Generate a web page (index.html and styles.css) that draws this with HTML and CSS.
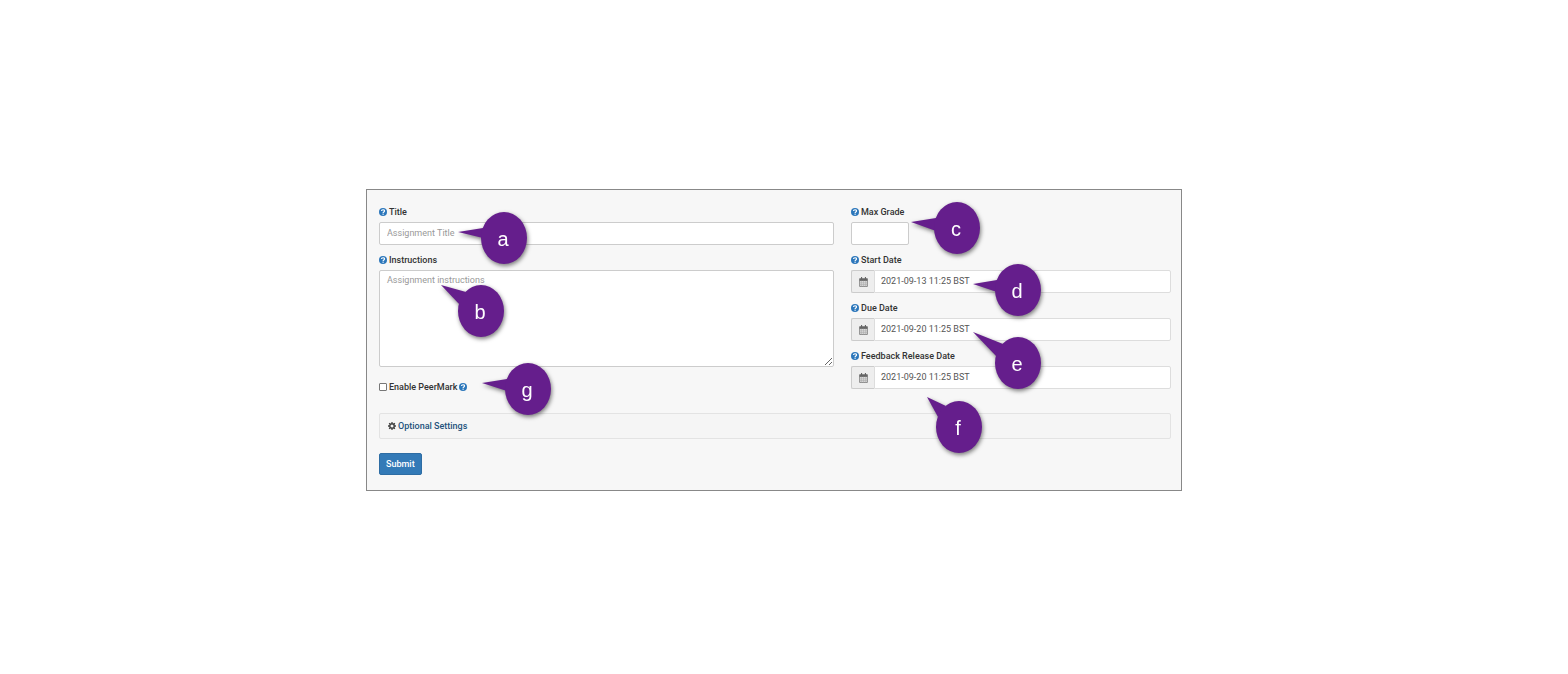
FILE: index.html
```
<!DOCTYPE html>
<html lang="en">
<head>
  <meta charset="UTF-8">
  <meta name="viewport" content="width=device-width, initial-scale=1.0">
  <title>Assignment Settings</title>
  <link rel="stylesheet" href="styles.css">
</head>
<body>
  <!-- Shared icons -->
  <svg class="sprite" aria-hidden="true">
    <symbol id="help" viewBox="0 0 16 16">
      <circle cx="8" cy="8" r="8" fill="#2c77bb"/>
      <path d="M5 6.2C5 2.7 11 2.7 11 6c0 2-2.800 2-2.800 4" fill="none" stroke="#fff" stroke-width="2.400"/>
      <rect x="7" y="11.200" width="2.400" height="2.400" fill="#fff"/>
    </symbol>
    <symbol id="calendar" viewBox="0 0 16 18">
      <path d="M1 3h14v14H1z" fill="#ddd" stroke="#777" stroke-width="1.500"/>
      <path d="M1 3h14v4H1z" fill="#666"/>
      <path d="M4.500 0v5M11.500 0v5" stroke="#666" stroke-width="2"/>
      <path d="M1 10.500h14M1 13.500h14M4.500 7v10M8 7v10M11.500 7v10" stroke="#aaa" stroke-width="1"/>
    </symbol>
    <symbol id="gear" viewBox="0 0 16 16">
      <circle cx="8" cy="8" r="4.500" fill="none" stroke="#444" stroke-width="3"/>
      <path d="M8 0v3M8 13v3M0 8h3M13 8h3M2.300 2.300l2.200 2.200M11.500 11.500l2.200 2.200M13.700 2.300l-2.200 2.200M4.500 11.500l-2.200 2.200" stroke="#444" stroke-width="2.600"/>
    </symbol>
  </svg>

  <form class="panel">
    <div class="columns">
      <div class="column">
        <div class="field">
          <label for="title"><svg class="icon"><use href="#help"/></svg>Title</label>
          <input type="text" id="title" placeholder="Assignment Title">
        </div>
        <div class="field">
          <label for="instructions"><svg class="icon"><use href="#help"/></svg>Instructions</label>
          <textarea id="instructions" placeholder="Assignment instructions"></textarea>
        </div>
        <div class="check">
          <input type="checkbox" id="peermark">
          <label for="peermark">Enable PeerMark<svg class="icon"><use href="#help"/></svg></label>
        </div>
      </div>

      <div class="column">
        <div class="field">
          <label for="grade"><svg class="icon"><use href="#help"/></svg>Max Grade</label>
          <input type="text" id="grade" class="short">
        </div>
        <div class="field">
          <label for="start"><svg class="icon"><use href="#help"/></svg>Start Date</label>
          <div class="date">
            <span class="addon"><svg><use href="#calendar"/></svg></span>
            <input type="text" id="start" value="2021-09-13 11:25 BST">
          </div>
        </div>
        <div class="field">
          <label for="due"><svg class="icon"><use href="#help"/></svg>Due Date</label>
          <div class="date">
            <span class="addon"><svg><use href="#calendar"/></svg></span>
            <input type="text" id="due" value="2021-09-20 11:25 BST">
          </div>
        </div>
        <div class="field">
          <label for="feedback"><svg class="icon"><use href="#help"/></svg>Feedback Release Date</label>
          <div class="date">
            <span class="addon"><svg><use href="#calendar"/></svg></span>
            <input type="text" id="feedback" value="2021-09-20 11:25 BST">
          </div>
        </div>
      </div>
    </div>

    <div class="optional">
      <a href="#optional"><svg class="icon"><use href="#gear"/></svg>Optional Settings</a>
    </div>
    <button type="submit" class="submit">Submit</button>

    <!-- Lettered callouts over the form -->
    <div class="callout a"><svg><path d="M16 16L-9 20L16 26z"/><ellipse cx="37" cy="26" rx="23" ry="26"/></svg><span>a</span></div>
    <div class="callout b"><svg><path d="M22 7L-3 0L16 20z"/><ellipse cx="37" cy="26" rx="23" ry="26"/></svg><span>b</span></div>
    <div class="callout c"><svg><path d="M16 16L-9 20L16 29z"/><ellipse cx="37" cy="26" rx="23" ry="26"/></svg><span>c</span></div>
    <div class="callout d"><svg><path d="M16 16L-8 20L16 28z"/><ellipse cx="37" cy="26" rx="23" ry="26"/></svg><span>d</span></div>
    <div class="callout e"><svg><path d="M22 7L-8 -5L16 20z"/><ellipse cx="37" cy="26" rx="23" ry="26"/></svg><span>e</span></div>
    <div class="callout f"><svg><path d="M24 5L5 -4L16 16z"/><ellipse cx="37" cy="26" rx="23" ry="26"/></svg><span>f</span></div>
    <div class="callout g"><svg><path d="M16 16L-9 20L16 28z"/><ellipse cx="37" cy="26" rx="23" ry="26"/></svg><span>g</span></div>
  </form>
</body>
</html>
```
FILE: styles.css
```
* {
  box-sizing: border-box;
}

body {
  margin: 0;
  padding: 189px 20px 40px 0;
  background: #fff;
  color: #333;
  font-family: Roboto, "Liberation Sans", Arial, sans-serif;
  font-size: 9px;
}

.sprite {
  position: absolute;
  width: 0;
  height: 0;
}

.panel {
  position: relative;
  max-width: 816px;
  margin: 0 auto;
  padding: 14px 10px 15px 12px;
  background: #f7f7f7;
  border: 1px solid #888;
}

.columns {
  display: grid;
  grid-template-columns: 455fr 320fr;
  gap: 17px;
}

.field {
  margin-bottom: 7px;
}

label {
  display: flex;
  align-items: center;
  gap: 2px;
  line-height: 16px;
  font-weight: 500;
}

.field label {
  margin-bottom: 2px;
}

.icon {
  width: 8px;
  height: 8px;
}

input,
textarea {
  display: block;
  width: 100%;
  margin: 0;
  padding: 0 7px;
  border: 1px solid #ccc;
  border-radius: 2px;
  background: #fff;
  color: #555;
  font: inherit;
}

input {
  height: 23px;
  padding-bottom: 1px;
}

textarea {
  height: 97px;
  padding: 4px 7px;
}

::placeholder {
  color: #999;
}

.short {
  width: 58px;
}

.date {
  display: flex;
}

.date input {
  padding-left: 6px;
  border-color: #ddd;
  border-radius: 0 2px 2px 0;
}

.addon {
  display: flex;
  flex: none;
  align-items: center;
  justify-content: center;
  width: 23px;
  background: #eee;
  border: 1px solid #ccc;
  border-right: 0;
  border-radius: 2px 0 0 2px;
}

.addon svg {
  width: 9px;
  height: 10px;
}

.check {
  display: flex;
  align-items: center;
  gap: 2px;
  margin-top: 12px;
}

.check input {
  appearance: none;
  width: 8px;
  height: 8px;
  padding: 0;
  border-color: #777;
  border-radius: 1px;
}

.optional {
  margin-top: 17px;
  padding: 4px 8px;
  background: #f5f5f5;
  border: 1px solid #e3e3e3;
  border-radius: 2px;
}

.optional a {
  display: flex;
  align-items: center;
  gap: 2px;
  color: #23527c;
  font-weight: 500;
  line-height: 16px;
  text-decoration: none;
}

.submit {
  display: block;
  height: 22px;
  margin-top: 14px;
  padding: 0 6px;
  background: #337ab7;
  border: 1px solid #2e6da4;
  border-radius: 2px;
  color: #fff;
  font: inherit;
  font-weight: 500;
}

.callout {
  position: absolute;
  width: 60px;
  height: 52px;
  filter: drop-shadow(1px 2px 2px rgba(0, 0, 0, 0.5));
  pointer-events: none;
}

.callout svg {
  display: block;
  width: 60px;
  height: 52px;
  overflow: visible;
  fill: #651e8c;
}

.callout span {
  position: absolute;
  inset: 0 0 0 12px;
  color: #fff;
  font-family: "Liberation Sans", Arial, sans-serif;
  font-size: 20px;
  line-height: 54px;
  text-align: center;
}

.a { left: 100px; top: 22px; }
.b { left: 77px; top: 95px; }
.c { left: 553px; top: 12px; }
.d { left: 614px; top: 74px; }
.e { left: 614px; top: 147px; }
.f { left: 555px; top: 211px; }
.g { left: 124px; top: 173px; }
```
